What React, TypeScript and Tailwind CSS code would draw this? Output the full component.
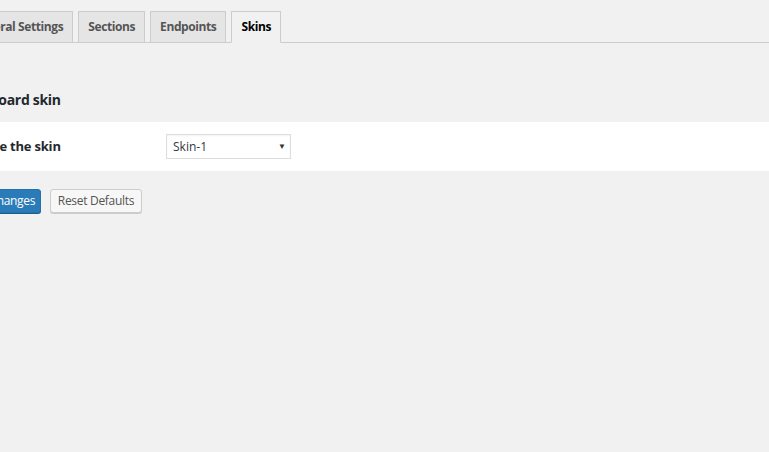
import React from 'react';

const tabs = ['General Settings', 'Sections', 'Endpoints', 'Skins'];

export default function App() {
    const active = 'Skins';

    return (
        <div className="min-h-[452px] w-full overflow-hidden bg-[#f1f1f1] text-[#23282d]" style={{ fontFamily: '"Open Sans", "Noto Sans", sans-serif' }}>
            <div className="ml-[-44px]">
                {/* Tabs */}
                <div className="flex items-end gap-[5px] border-b border-[#ccc] pt-[11px] pl-[5px] w-[calc(100%+44px)]">
                    {tabs.map((t) => {
                        const isActive = t === active;
                        return (
                            <div
                                key={t}
                                className={
                                    isActive
                                        ? 'mb-[-1px] h-[32px] flex items-center px-[9px] border border-[#ccc] border-b-[#f1f1f1] bg-[#f1f1f1] text-[12px] tracking-[-0.4px] font-bold text-black'
                                        : 'h-[31px] flex items-center px-[9px] border border-b-0 border-[#ccc] bg-[#e5e5e5] text-[12px] tracking-[-0.4px] font-bold text-[#555]'
                                }
                            >
                                {t}
                            </div>
                        );
                    })}
                </div>

                {/* Heading */}
                <h2 className="mt-[47px] text-[14px] tracking-[-0.3px] font-bold leading-[20px] text-[#23282d]">Dashboard skin</h2>

                {/* Form row */}
                <div className="mt-[12px] flex items-center h-[49px] bg-white w-[calc(100%+44px)]">
                    <div className="w-[210px] pl-[5px] text-[13px] tracking-[-0.2px] font-bold">Choose the skin</div>
                    <div className="relative w-[125px] h-[25px] border border-[#ddd] bg-white flex items-center px-[6px] text-[12px] text-[#32373c] shadow-[inset_0_1px_2px_rgba(0,0,0,0.05)]">
                        Skin-1
                        <span className="absolute right-[4px] top-[5px] text-[8px] text-[#333]">▼</span>
                    </div>
                </div>

                {/* Buttons */}
                <div className="mt-[18px] flex gap-[9px]">
                    <button className="h-[24px] w-[85px] rounded-[3px] bg-[#2b7bb9] border border-[#2272a8] text-white text-[12px] tracking-[-0.3px] shadow-[0_1px_0_#1d5f8f]">
                        Save Changes
                    </button>
                    <button className="h-[24px] w-[92px] rounded-[3px] bg-[#f7f7f7] border border-[#ccc] text-[#555] text-[12px] tracking-[-0.3px] shadow-[0_1px_0_#ccc]">
                        Reset Defaults
                    </button>
                </div>
            </div>
        </div>
    );
}
